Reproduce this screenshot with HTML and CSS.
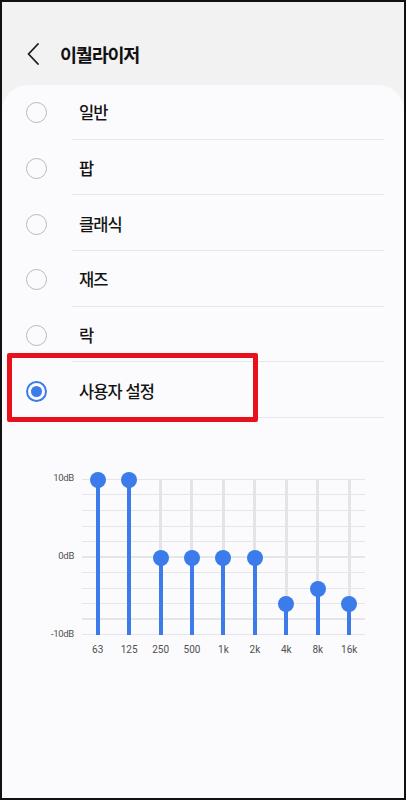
FILE: index.html
```html
<!DOCTYPE html>
<html lang="ko">
<head>
<meta charset="utf-8">
<title>이퀄라이저</title>
<link rel="stylesheet" href="styles.css">
</head>
<body>
<div class="screen">
  <header class="topbar">
    <svg class="back" width="12" height="22" viewBox="0 0 12 22"><polyline points="11,1 1.5,11 11,21" fill="none" stroke="#1a1a1a" stroke-width="1.8" stroke-linecap="round" stroke-linejoin="round"/></svg>
    <h1 class="title">이퀄라이저</h1>
  </header>
  <main class="card">
    <ul class="presets">
      <li class="row"><span class="radio"></span><span class="body">일반</span></li>
      <li class="row"><span class="radio"></span><span class="body">팝</span></li>
      <li class="row"><span class="radio"></span><span class="body">클래식</span></li>
      <li class="row"><span class="radio"></span><span class="body">재즈</span></li>
      <li class="row"><span class="radio"></span><span class="body">락</span></li>
      <li class="row selected"><span class="radio on"></span><span class="body">사용자 설정</span><span class="highlight"></span></li>
    </ul>
    <section class="eq">
      <div class="yaxis"><span>10dB</span><span>0dB</span><span>-10dB</span></div>
      <div class="plot">
        <div class="col"><span class="knob"></span><span class="bar" style="height:155px"></span></div>
        <div class="col"><span class="knob"></span><span class="bar" style="height:155px"></span></div>
        <div class="col"><span class="knob"></span><span class="bar" style="height:77.5px"></span></div>
        <div class="col"><span class="knob"></span><span class="bar" style="height:77.5px"></span></div>
        <div class="col"><span class="knob"></span><span class="bar" style="height:77.5px"></span></div>
        <div class="col"><span class="knob"></span><span class="bar" style="height:77.5px"></span></div>
        <div class="col"><span class="knob"></span><span class="bar" style="height:31px"></span></div>
        <div class="col"><span class="knob"></span><span class="bar" style="height:46.5px"></span></div>
        <div class="col"><span class="knob"></span><span class="bar" style="height:31px"></span></div>
      </div>
      <div></div>
      <div class="xaxis"><span>63</span><span>125</span><span>250</span><span>500</span><span>1k</span><span>2k</span><span>4k</span><span>8k</span><span>16k</span></div>
    </section>
  </main>
</div>
</body>
</html>
```
FILE: styles.css
```css
* { box-sizing: border-box; }
html, body { margin: 0; padding: 0; }
body { background: #fff; font-family: "Noto Sans CJK KR", "Noto Sans", sans-serif; }

.screen {
  width: 406px;
  height: 800px;
  border: 2px solid #111;
  background: #f2f2f2;
  display: flex;
  flex-direction: column;
  overflow: hidden;
}

.topbar {
  height: 83px;
  flex: none;
  display: flex;
  align-items: center;
  padding: 20px 0 0 25px;
}
.back { display: block; flex: none; }
.title {
  margin: 0 0 0 21px;
  font-size: 18.5px;
  font-weight: 700;
  color: #111;
  letter-spacing: -1.2px;
  line-height: 24px;
}

.card {
  flex: 1;
  background: #fbfbfd;
  border-radius: 26px 26px 0 0;
}

.presets {
  list-style: none;
  margin: -1px 0 0 0;
  padding: 0;
}
.row {
  position: relative;
  height: 55.7px;
  display: flex;
  align-items: stretch;
}
.radio {
  flex: none;
  width: 21px;
  height: 21px;
  margin: 0 0 0 23.5px;
  align-self: center;
  position: relative;
  top: 1px;
  border: 1.6px solid #b9b9bb;
  border-radius: 50%;
}
.radio.on {
  border: 2px solid #3b7bea;
  display: flex;
  align-items: center;
  justify-content: center;
}
.radio.on::after {
  content: "";
  width: 11px;
  height: 11px;
  border-radius: 50%;
  background: #3b7bea;
}
.body {
  flex: 1;
  margin: 0 20px 0 25.5px;
  padding: 2px 0 0 7px;
  display: flex;
  align-items: center;
  border-bottom: 1px solid #e7e7ea;
  font-size: 16.5px;
  font-weight: 500;
  color: #141414;
  letter-spacing: -0.9px;
  white-space: pre;
}
.highlight {
  position: absolute;
  left: 5px;
  top: -9px;
  width: 251px;
  height: 69px;
  border: 5px solid #e8101a;
  border-radius: 2px;
}

.eq {
  display: grid;
  grid-template-columns: 80px 283px;
  row-gap: 9px;
  margin-top: 61px;
  font-family: Roboto, "Liberation Sans", sans-serif;
  color: #505050;
}
.yaxis {
  margin: -7px 0 -5px 0;
  padding-right: 8px;
  display: flex;
  flex-direction: column;
  justify-content: space-between;
  align-items: flex-end;
  font-size: 9.5px;
  line-height: 12px;
  letter-spacing: -0.3px;
}
.plot {
  height: 156px;
  display: flex;
  background: repeating-linear-gradient(to bottom, #e6e6e9 0 1px, transparent 1px 15.5px);
}
.col {
  flex: 1;
  display: flex;
  flex-direction: column;
  justify-content: flex-end;
  align-items: center;
  background: linear-gradient(to right, transparent calc(50% - 1.5px), #e4e4e8 calc(50% - 1.5px), #e4e4e8 calc(50% + 1.5px), transparent calc(50% + 1.5px));
}
.knob {
  flex: none;
  width: 16px;
  height: 16px;
  border-radius: 50%;
  background: #3b7bea;
  margin-bottom: -8px;
  position: relative;
  z-index: 1;
}
.bar {
  flex: none;
  width: 4px;
  background: #3b7bea;
}
.xaxis {
  display: flex;
  font-size: 10px;
  line-height: 12px;
}
.xaxis span {
  flex: 1;
  text-align: center;
}
```
